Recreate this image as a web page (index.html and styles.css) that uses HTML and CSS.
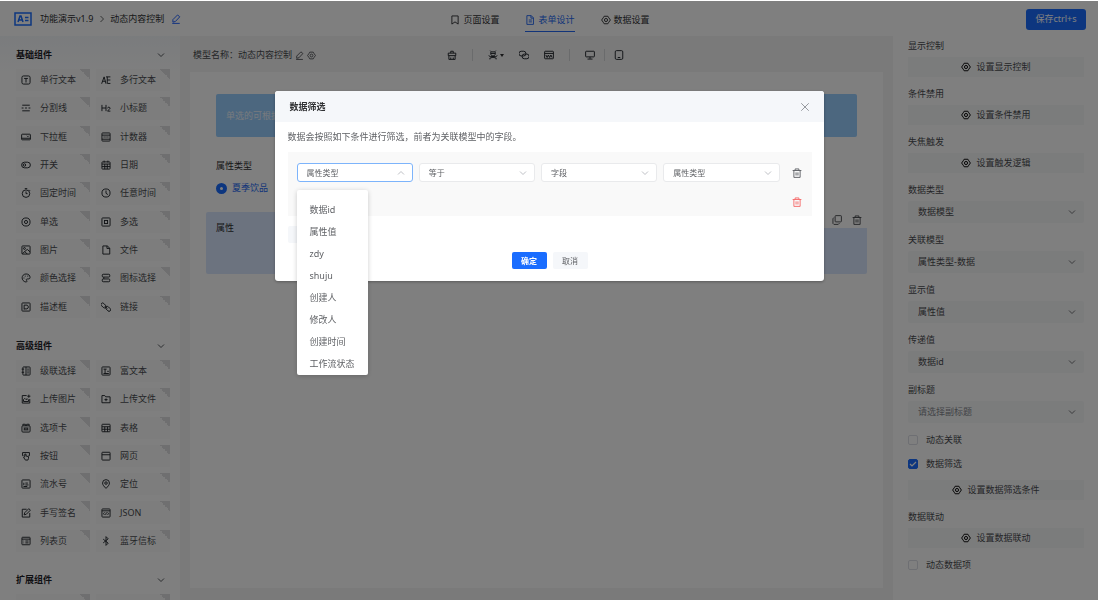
FILE: index.html
```html
<!DOCTYPE html>
<html lang="zh-CN">
<head>
  <meta charset="UTF-8">
  <meta name="viewport" content="width=device-width, initial-scale=1.0">
  <title>表单设计</title>
  <link rel="stylesheet" href="styles.css">
</head>
<body>
  <!-- Icon sprite -->
  <svg class="sprite" xmlns="http://www.w3.org/2000/svg">
    <symbol id="i-down" viewBox="0 0 16 16"><path d="M2 5l6 6 6-6"/></symbol>
    <symbol id="i-up" viewBox="0 0 16 16"><path d="M2 11l6-6 6 6"/></symbol>
    <symbol id="i-close" viewBox="0 0 16 16"><path d="M2 2l12 12M14 2L2 14"/></symbol>
    <symbol id="i-edit" viewBox="0 0 16 16"><path d="M3 9l7.500-7.500 3.500 3L7 12l-4 1zM2 15h12"/></symbol>
    <symbol id="i-gear" viewBox="0 0 16 16"><path d="M5 2h6l1.500 2.500L15 8l-2.500 3.500L11 14H5l-1.500-2.500L1 8l2.500-3.500z"/><circle cx="8" cy="8" r="2.500"/></symbol>
    <symbol id="i-trash" viewBox="0 0 16 16"><path d="M1 4h14M5 4V1.500h6V4M3 4v11h10V4M6.500 7v5M9.500 7v5"/></symbol>
    <symbol id="i-copy" viewBox="0 0 16 16"><rect x="5" y="1" width="10" height="10" rx="1"/><path d="M3 4L1.500 6v7.500L3 15h7l2-2"/></symbol>
    <symbol id="i-bookmark" viewBox="0 0 16 16"><path d="M3 1.500h10v13L8 11l-5 3.500z"/></symbol>
    <symbol id="i-doc" viewBox="0 0 16 16"><path d="M3 1h7l3.500 3.500V15H3zM9.500 1v4h4M6 8h5M6 11h5"/></symbol>
    <symbol id="i-clean" viewBox="0 0 16 16"><path d="M6 5V2h4v3M2 5h12v4H2zM3 9v6h10V9M6 15v-3M10 15v-3"/></symbol>
    <symbol id="i-person" viewBox="0 0 16 16"><path d="M3.500 1l2 2h5l2-2M4.500 3v4l2 2.500h3l2-2.500V3M4.500 5.500h7M8 9.500V12M1 9l2.500 1.500h9L15 9M3 15v-2l5-1.500 5 1.500v2"/></symbol>
    <symbol id="i-chain" viewBox="0 0 16 16"><rect x="0" y="2" width="11" height="7.500" rx="3.500"/><rect x="5" y="6.500" width="11" height="7.500" rx="3.500"/></symbol>
    <symbol id="i-code" viewBox="0 0 16 16"><rect x="1" y="2" width="14" height="12" rx="1"/><path d="M1 5.500h14M3 8l2 4 2-4 2 4 2-4 2 4"/></symbol>
    <symbol id="i-monitor" viewBox="0 0 16 16"><rect x="1" y="2" width="14" height="9" rx="1"/><path d="M8 11v3M4 14.500h8"/></symbol>
    <symbol id="i-tablet" viewBox="0 0 16 16"><rect x="2" y="1" width="12" height="14" rx="2"/><path d="M6 12h4"/></symbol>
    <symbol id="i-text" viewBox="0 0 16 16"><rect x="1.500" y="1.500" width="13" height="13" rx="2.500"/><path d="M5 5.500h6M8 5.500V12"/></symbol>
    <symbol id="i-area" viewBox="0 0 16 16"><path d="M1 14L5 3l3 11M2.500 10H7M8 3h7M10 8h5M10 13.500h5M10 3v10"/></symbol>
    <symbol id="i-line" viewBox="0 0 16 16"><path d="M2 3.500h12M1 8h3M6.500 8h3M12 8h3M2 12.500h12"/></symbol>
    <symbol id="i-h2" viewBox="0 0 16 16"><path d="M1.500 3v10M8 3v10M1.500 8H8M10.500 8.500c0-2.500 4-2.500 4 0 0 1.500-4 3-4 4.500H15"/></symbol>
    <symbol id="i-select" viewBox="0 0 16 16"><rect x="1" y="3.500" width="14" height="9" rx="1"/><path d="M1 10h14M9.500 6l1.500 1.500L12.500 6"/></symbol>
    <symbol id="i-count" viewBox="0 0 16 16"><rect x="1.500" y="1.500" width="13" height="13" rx="1"/><path d="M1.500 5h13M1.500 11.500h13M4 8h2M7 8h2M10 8h2"/></symbol>
    <symbol id="i-switch" viewBox="0 0 16 16"><rect x="1" y="3.500" width="14" height="9" rx="4.500"/><circle cx="5.500" cy="8" r="2"/></symbol>
    <symbol id="i-date" viewBox="0 0 16 16"><rect x="1.500" y="3" width="13" height="11.500" rx="1"/><path d="M1.500 6.500h13M5 1v3M11 1v3M6 6.500v8M10 6.500v8M1.500 10.500h13"/></symbol>
    <symbol id="i-timer" viewBox="0 0 16 16"><circle cx="8" cy="9" r="6"/><path d="M6 1h4M8 5.500V9h2.500M13 3l1.500 1.500"/></symbol>
    <symbol id="i-clock" viewBox="0 0 16 16"><circle cx="8" cy="8" r="6.500"/><path d="M8 4v4.500l3 2"/></symbol>
    <symbol id="i-radio" viewBox="0 0 16 16"><circle cx="8" cy="8" r="6.500"/><circle cx="8" cy="8" r="2.500"/></symbol>
    <symbol id="i-check" viewBox="0 0 16 16"><rect x="1.500" y="1.500" width="13" height="13" rx="1"/><rect x="5.500" y="5.500" width="5" height="5"/></symbol>
    <symbol id="i-image" viewBox="0 0 16 16"><rect x="1.500" y="1.500" width="13" height="13" rx="1"/><circle cx="5.500" cy="5.500" r="1.500"/><path d="M2 14l8-7 4.500 4M6 10.500l4 4"/></symbol>
    <symbol id="i-file" viewBox="0 0 16 16"><path d="M3 1.500h7L14 5v9.500H3zM9.500 1.500v4H14"/></symbol>
    <symbol id="i-color" viewBox="0 0 16 16"><path d="M8 14.500C-.5 13 0 2 8 1.500c4 0 6.500 2.500 6.500 5.500 0 3-3 2.500-4.500 2.500S8 11 9 12s.5 2.500-1 2.500z"/><path d="M4 8h1.500M6 5h1.500M10 5h1.500"/></symbol>
    <symbol id="i-icons" viewBox="0 0 16 16"><rect x="2" y="2" width="12" height="4.500" rx="1.500"/><rect x="2" y="9.500" width="12" height="4.500" rx="1.500"/><path d="M4.500 6.500v3"/></symbol>
    <symbol id="i-desc" viewBox="0 0 16 16"><rect x="1.500" y="1.500" width="13" height="13" rx="1"/><path d="M5 12V5h5l1.500 1.500v3L9.500 11H5"/></symbol>
    <symbol id="i-link" viewBox="0 0 16 16"><rect x="-.5" y="3" width="9" height="5" rx="2.500" transform="rotate(45 4 5.500)"/><rect x="7" y="8.500" width="9" height="5" rx="2.500" transform="rotate(45 11.500 11)"/><path d="M6 6.500l4 4"/></symbol>
    <symbol id="i-cascade" viewBox="0 0 16 16"><rect x="3" y="1.500" width="11.500" height="13" rx="1"/><path d="M8 1.500v13M1 5h4M1 10h4M10 5h2.500M10 8h2.500M10 11h2.500"/></symbol>
    <symbol id="i-rich" viewBox="0 0 16 16"><rect x="1.500" y="1.500" width="13" height="13" rx="1"/><path d="M4 5h5M6.500 5v6.500M10 8.500h2.500M4 12h8.500"/></symbol>
    <symbol id="i-upimg" viewBox="0 0 16 16"><path d="M9 2.500H2v12h12V8M12.500 1v5M10 3.500h5M4 12V9l2-2 2 2 2-1.500 2 2V12z"/></symbol>
    <symbol id="i-upfile" viewBox="0 0 16 16"><path d="M1.500 2.500H6l1.500 2h7v9.500h-13zM8 7v4.500M5.500 9h5"/></symbol>
    <symbol id="i-tab" viewBox="0 0 16 16"><rect x="1.500" y="4.500" width="13" height="10" rx="1.500"/><path d="M3 4.500V2h4v2.500M9 4.500V2h4v2.500M4 8h8M4 11h8M6 8v3M10 8v3"/></symbol>
    <symbol id="i-table" viewBox="0 0 16 16"><rect x="1.500" y="2" width="13" height="12" rx="1"/><path d="M1.500 6h13M1.500 10h13M6 6v8M10.500 6v8"/></symbol>
    <symbol id="i-button" viewBox="0 0 16 16"><path d="M4 7.500H2.500v-5h11v5H12M6 13l-2-3 2-.5V5h2v3l4 1v3l-1 2.500H7z"/></symbol>
    <symbol id="i-web" viewBox="0 0 16 16"><rect x="1.500" y="2" width="13" height="12.500" rx="1"/><path d="M1.500 6h13"/></symbol>
    <symbol id="i-serial" viewBox="0 0 16 16"><rect x="1.500" y="1.500" width="13" height="13" rx="1"/><path d="M4.500 6v4M7 6.500h4M7 9.500h5M4 12h6"/></symbol>
    <symbol id="i-pin" viewBox="0 0 16 16"><path d="M8 15C5 12 2.500 9.500 2.500 6.500a5.500 5.500 0 0 1 11 0C13.500 9.500 11 12 8 15z"/><circle cx="8" cy="6.500" r="2"/></symbol>
    <symbol id="i-sign" viewBox="0 0 16 16"><path d="M9 2H2v12.500h12V8M5 11l1-3.500L12.500 1 15 3.500 8.500 10z"/></symbol>
    <symbol id="i-json" viewBox="0 0 16 16"><rect x="1.500" y="1.500" width="13" height="13" rx="1"/><path d="M1.500 4.500h13M5.500 7L4 9l1.500 2M10.500 7L12 9l-1.500 2M8.500 7l-1 4"/></symbol>
    <symbol id="i-list" viewBox="0 0 16 16"><rect x="1.500" y="2" width="13" height="12" rx="1"/><path d="M1.500 5h13M4 8h1M7 8h5M4 11h1M7 11h5"/></symbol>
    <symbol id="i-bt" viewBox="0 0 16 16"><path d="M3.500 5l8 6.500L8 15V1l3.500 3.500-8 6.500"/></symbol>
  </svg>

  <header class="header">
    <div class="brand">
      <svg class="logo" viewBox="0 0 18 14"><rect x="1" y="1" width="16" height="12"/><path d="M4 10l2-6h1l2 6M5 8h3M11 5.500h3.500M11 8.500h3.500"/></svg>
      <span>功能演示v1.9</span>
      <svg class="icon crumb" viewBox="0 0 16 16"><path d="M5 2l6 6-6 6"/></svg>
      <span>动态内容控制</span>
      <svg class="icon brand-edit"><use href="#i-edit"/></svg>
    </div>
    <nav class="nav">
      <a href="#"><svg class="icon"><use href="#i-bookmark"/></svg>页面设置</a>
      <a href="#" class="active"><svg class="icon"><use href="#i-doc"/></svg>表单设计</a>
      <a href="#"><svg class="icon"><use href="#i-gear"/></svg>数据设置</a>
    </nav>
    <button class="save">保存ctrl+s</button>
  </header>

  <div class="layout">
    <!-- Component library -->
    <aside class="sidebar">
      <section class="group">
        <h2>基础组件<svg class="icon"><use href="#i-down"/></svg></h2>
        <div class="tiles tiles-basic">
          <div class="tile"><svg class="icon"><use href="#i-text"/></svg>单行文本</div>
          <div class="tile"><svg class="icon"><use href="#i-area"/></svg>多行文本</div>
          <div class="tile"><svg class="icon"><use href="#i-line"/></svg>分割线</div>
          <div class="tile"><svg class="icon"><use href="#i-h2"/></svg>小标题</div>
          <div class="tile"><svg class="icon"><use href="#i-select"/></svg>下拉框</div>
          <div class="tile"><svg class="icon"><use href="#i-count"/></svg>计数器</div>
          <div class="tile"><svg class="icon"><use href="#i-switch"/></svg>开关</div>
          <div class="tile"><svg class="icon"><use href="#i-date"/></svg>日期</div>
          <div class="tile"><svg class="icon"><use href="#i-timer"/></svg>固定时间</div>
          <div class="tile"><svg class="icon"><use href="#i-clock"/></svg>任意时间</div>
          <div class="tile"><svg class="icon"><use href="#i-radio"/></svg>单选</div>
          <div class="tile"><svg class="icon"><use href="#i-check"/></svg>多选</div>
          <div class="tile"><svg class="icon"><use href="#i-image"/></svg>图片</div>
          <div class="tile"><svg class="icon"><use href="#i-file"/></svg>文件</div>
          <div class="tile"><svg class="icon"><use href="#i-color"/></svg>颜色选择</div>
          <div class="tile"><svg class="icon"><use href="#i-icons"/></svg>图标选择</div>
          <div class="tile"><svg class="icon"><use href="#i-desc"/></svg>描述框</div>
          <div class="tile"><svg class="icon"><use href="#i-link"/></svg>链接</div>
        </div>
      </section>
      <section class="group">
        <h2>高级组件<svg class="icon"><use href="#i-down"/></svg></h2>
        <div class="tiles tiles-advanced">
          <div class="tile"><svg class="icon"><use href="#i-cascade"/></svg>级联选择</div>
          <div class="tile"><svg class="icon"><use href="#i-rich"/></svg>富文本</div>
          <div class="tile"><svg class="icon"><use href="#i-upimg"/></svg>上传图片</div>
          <div class="tile"><svg class="icon"><use href="#i-upfile"/></svg>上传文件</div>
          <div class="tile"><svg class="icon"><use href="#i-tab"/></svg>选项卡</div>
          <div class="tile"><svg class="icon"><use href="#i-table"/></svg>表格</div>
          <div class="tile"><svg class="icon"><use href="#i-button"/></svg>按钮</div>
          <div class="tile"><svg class="icon"><use href="#i-web"/></svg>网页</div>
          <div class="tile"><svg class="icon"><use href="#i-serial"/></svg>流水号</div>
          <div class="tile"><svg class="icon"><use href="#i-pin"/></svg>定位</div>
          <div class="tile"><svg class="icon"><use href="#i-sign"/></svg>手写签名</div>
          <div class="tile"><svg class="icon"><use href="#i-json"/></svg>JSON</div>
          <div class="tile"><svg class="icon"><use href="#i-list"/></svg>列表页</div>
          <div class="tile"><svg class="icon"><use href="#i-bt"/></svg>蓝牙信标</div>
        </div>
      </section>
      <section class="group">
        <h2>扩展组件<svg class="icon"><use href="#i-down"/></svg></h2>
        <div class="tiles">
          <div class="tile"></div>
          <div class="tile"></div>
        </div>
      </section>
    </aside>

    <!-- Form canvas -->
    <main class="main">
      <div class="toolbar">
        <div class="model">
          <span>模型名称：动态内容控制</span>
          <svg class="icon"><use href="#i-edit"/></svg>
          <svg class="icon"><use href="#i-gear"/></svg>
        </div>
        <div class="tools">
          <button class="tool" aria-label="清空"><svg class="icon"><use href="#i-clean"/></svg></button>
          <span class="divider"></span>
          <div class="tool-group">
            <button class="tool" aria-label="事件"><svg class="icon"><use href="#i-person"/></svg><span class="caret"></span></button>
            <button class="tool" aria-label="关联"><svg class="icon"><use href="#i-chain"/></svg></button>
            <button class="tool" aria-label="代码"><svg class="icon"><use href="#i-code"/></svg></button>
          </div>
          <span class="divider"></span>
          <div class="tool-group devices">
            <button class="tool" aria-label="电脑"><svg class="icon"><use href="#i-monitor"/></svg></button>
            <span class="divider"></span>
            <button class="tool" aria-label="平板"><svg class="icon"><use href="#i-tablet"/></svg></button>
          </div>
        </div>
      </div>
      <div class="canvas">
        <div class="banner">单选的可根据</div>
        <div class="field">
          <div class="field-label">属性类型</div>
          <label class="radio"><input type="radio" name="kind" checked>夏季饮品</label>
        </div>
        <div class="field selected">
          <div class="field-label">属性</div>
          <div class="field-actions">
            <button class="tool" aria-label="复制"><svg class="icon"><use href="#i-copy"/></svg></button>
            <button class="tool" aria-label="删除"><svg class="icon"><use href="#i-trash"/></svg></button>
          </div>
        </div>
      </div>
    </main>

    <!-- Properties -->
    <aside class="props">
      <div class="prop">
        <div class="prop-label">显示控制</div>
        <button class="setting"><svg class="icon"><use href="#i-gear"/></svg>设置显示控制</button>
      </div>
      <div class="prop">
        <div class="prop-label">条件禁用</div>
        <button class="setting"><svg class="icon"><use href="#i-gear"/></svg>设置条件禁用</button>
      </div>
      <div class="prop">
        <div class="prop-label">失焦触发</div>
        <button class="setting"><svg class="icon"><use href="#i-gear"/></svg>设置触发逻辑</button>
      </div>
      <div class="prop">
        <label class="prop-label" for="data-type">数据类型</label>
        <div class="select"><select id="data-type"><option>数据模型</option></select><svg class="icon"><use href="#i-down"/></svg></div>
      </div>
      <div class="prop">
        <label class="prop-label" for="data-model">关联模型</label>
        <div class="select"><select id="data-model"><option>属性类型-数据</option></select><svg class="icon"><use href="#i-down"/></svg></div>
      </div>
      <div class="prop">
        <label class="prop-label" for="show-value">显示值</label>
        <div class="select"><select id="show-value"><option>属性值</option></select><svg class="icon"><use href="#i-down"/></svg></div>
      </div>
      <div class="prop">
        <label class="prop-label" for="pass-value">传递值</label>
        <div class="select"><select id="pass-value"><option>数据id</option></select><svg class="icon"><use href="#i-down"/></svg></div>
      </div>
      <div class="prop">
        <label class="prop-label" for="subtitle">副标题</label>
        <div class="select"><select id="subtitle" class="placeholder"><option>请选择副标题</option></select><svg class="icon"><use href="#i-down"/></svg></div>
      </div>
      <label class="check"><input type="checkbox">动态关联</label>
      <label class="check"><input type="checkbox" checked>数据筛选</label>
      <div class="prop">
        <button class="setting"><svg class="icon"><use href="#i-gear"/></svg>设置数据筛选条件</button>
      </div>
      <div class="prop">
        <div class="prop-label">数据联动</div>
        <button class="setting"><svg class="icon"><use href="#i-gear"/></svg>设置数据联动</button>
      </div>
      <label class="check"><input type="checkbox">动态数据项</label>
    </aside>
  </div>

  <!-- Filter dialog -->
  <div class="overlay">
    <div class="modal" role="dialog" aria-labelledby="modal-title">
      <div class="modal-header">
        <h1 id="modal-title">数据筛选</h1>
        <button class="close" aria-label="关闭"><svg class="icon"><use href="#i-close"/></svg></button>
      </div>
      <div class="modal-body">
        <p>数据会按照如下条件进行筛选，前者为关联模型中的字段。</p>
        <div class="filter-box">
          <div class="filter-row">
            <div class="filter-fields">
              <div class="select open">
                <select aria-label="字段"><option>属性类型</option></select><svg class="icon"><use href="#i-up"/></svg>
                <ul class="menu">
                  <li>数据id</li>
                  <li>属性值</li>
                  <li>zdy</li>
                  <li>shuju</li>
                  <li>创建人</li>
                  <li>修改人</li>
                  <li>创建时间</li>
                  <li>工作流状态</li>
                </ul>
              </div>
              <div class="select"><select aria-label="条件"><option>等于</option></select><svg class="icon"><use href="#i-down"/></svg></div>
              <div class="select"><select aria-label="类型"><option>字段</option></select><svg class="icon"><use href="#i-down"/></svg></div>
              <div class="select"><select aria-label="值"><option>属性类型</option></select><svg class="icon"><use href="#i-down"/></svg></div>
            </div>
            <button class="tool" aria-label="删除条件"><svg class="icon"><use href="#i-trash"/></svg></button>
          </div>
          <div class="filter-row filter-end">
            <button class="tool danger" aria-label="删除分组"><svg class="icon"><use href="#i-trash"/></svg></button>
          </div>
        </div>
        <button class="add" aria-label="添加条件"></button>
        <div class="modal-footer">
          <button class="btn primary">确定</button>
          <button class="btn">取消</button>
        </div>
      </div>
    </div>
  </div>
</body>
</html>
```

FILE: styles.css
```css
* {
  box-sizing: border-box;
}

body {
  margin: 0;
  height: 100vh;
  overflow: hidden;
  display: flex;
  flex-direction: column;
  font-family: "Noto Sans", "Noto Sans CJK SC", sans-serif;
  font-size: 9px;
  line-height: 16px;
  color: #4a4c50;
  background-color: #fff;
}

button,
select,
input {
  font: inherit;
  color: inherit;
  margin: 0;
}

button {
  border: none;
  padding: 0;
  background: none;
  cursor: pointer;
}

.sprite {
  position: absolute;
  width: 0;
  height: 0;
}

.icon {
  width: 10px;
  height: 10px;
  flex: none;
  fill: none;
  stroke: currentColor;
  stroke-width: 1.5;
}

/* Header */
.header {
  flex: none;
  height: 36px;
  padding: 2px 12px 0 14px;
  display: grid;
  grid-template-columns: 1fr auto 1fr;
  align-items: center;
}

.brand {
  display: flex;
  align-items: center;
  color: #303133;
}

.logo {
  width: 18px;
  height: 14px;
  margin-right: 8px;
  fill: none;
  stroke: #1a6dff;
  stroke-width: 1.5;
}

.crumb {
  width: 8px;
  height: 8px;
  margin: 0 4px 0 5px;
}

.brand-edit {
  margin-left: 7px;
  color: #1a5cff;
}

.nav {
  display: flex;
  gap: 26px;
}

.nav a {
  display: flex;
  align-items: center;
  gap: 3px;
  padding: 6px 0 3px;
  border-bottom: 1px solid transparent;
  color: #303133;
  text-decoration: none;
}

.nav a.active {
  color: #2468f2;
  border-bottom-color: #2468f2;
}

.save {
  justify-self: end;
  width: 60px;
  height: 21px;
  border-radius: 3px;
  background-color: #1a6dff;
  color: #fff;
}

.layout {
  flex: 1;
  min-height: 0;
  display: flex;
}

/* Component library */
.sidebar {
  width: 180px;
  flex: none;
  padding: 5px 10px 0 16px;
  overflow: hidden;
  background: linear-gradient(#f5f8fb, #fff 40px);
}

.group {
  margin-bottom: 14px;
}

.group h2 {
  display: flex;
  align-items: center;
  justify-content: space-between;
  height: 28px;
  margin: 0;
  padding-right: 5px;
  font-size: 9px;
  font-weight: 700;
  color: #1f2329;
}

.group h2 .icon {
  width: 8px;
  height: 8px;
}

.tiles {
  display: grid;
  grid-template-columns: 1fr 1fr;
  grid-auto-rows: 1fr;
  gap: 6px;
}

.tiles-basic {
  height: 249px;
}

.tiles-advanced {
  height: 192px;
}

.tile {
  min-height: 22px;
  display: flex;
  align-items: center;
  gap: 9px;
  padding-left: 5px;
  background: linear-gradient(45deg, transparent 50%, #dedfe0 50%) right top / 10px 10px no-repeat #fafbfb;
}

.tile .icon {
  color: #1f2329;
}

/* Form canvas */
.main {
  flex: 1;
  min-width: 0;
  display: flex;
  flex-direction: column;
  padding: 0 10px 12px;
  background-color: #f4f4f5;
}

.toolbar {
  height: 36px;
  padding: 2px 6px 0 3px;
  display: grid;
  grid-template-columns: 1fr auto 1fr;
  align-items: center;
}

.model,
.tools,
.tool-group {
  display: flex;
  align-items: center;
}

.model {
  gap: 3px;
}

.model .icon {
  width: 9px;
  height: 9px;
}

.tools .icon {
  color: #1f2329;
}

.tools,
.tool-group {
  gap: 15px;
}

.tool-group.devices {
  gap: 9px;
}

.tool {
  display: flex;
  align-items: center;
  gap: 2px;
}

.divider {
  width: 1px;
  height: 12px;
  background-color: #d4d6d8;
}

.caret {
  border: 2px solid transparent;
  border-top: 3px solid #303133;
  border-bottom: 0;
}

.canvas {
  flex: 1;
  padding: 22px 16px;
  background-color: #fff;
}

.banner {
  height: 43px;
  margin: 0 10px;
  padding: 14px 10px;
  border-radius: 2px;
  background-color: #98ceff;
  color: #eef5fc;
}

.field {
  padding: 21px 10px 16px;
}

.field-label {
  color: #303133;
}

.radio {
  display: flex;
  align-items: center;
  gap: 5px;
  margin-top: 6px;
  color: #2468f2;
}

.radio input {
  appearance: none;
  width: 11px;
  height: 11px;
  border: 4px solid #1a6dff;
  border-radius: 50%;
  background-color: #fff;
}

.field.selected {
  position: relative;
  height: 62px;
  padding: 8px 10px;
  border-radius: 2px;
  background-color: #d9e7ff;
}

.field-actions {
  position: absolute;
  top: 0;
  right: 0;
  display: flex;
  align-items: center;
  gap: 10px;
  height: 16px;
  padding: 0 5px 0 13px;
  background-color: #fff;
}

/* Properties */
.props {
  width: 205px;
  flex: none;
  padding: 2px 14px 0 15px;
  overflow: hidden;
}

.prop {
  margin-bottom: 9px;
}

.prop-label {
  display: block;
  margin-bottom: 3px;
}

.setting {
  width: 100%;
  height: 20px;
  display: flex;
  align-items: center;
  justify-content: center;
  gap: 5px;
  background-color: #f7f8f9;
}

.setting .icon {
  color: #000;
}

.select {
  position: relative;
  display: flex;
  align-items: center;
}

.select select {
  appearance: none;
  width: 100%;
  height: 22px;
  padding: 0 24px 0 10px;
  border: none;
  border-radius: 2px;
  outline: none;
  background-color: #f7f8f9;
}

.select > .icon {
  position: absolute;
  right: 8px;
  width: 8px;
  height: 8px;
  pointer-events: none;
}

.select select.placeholder {
  color: #85888e;
}

.check {
  display: flex;
  align-items: center;
  gap: 8px;
  margin-bottom: 8px;
}

.check input {
  appearance: none;
  width: 10px;
  height: 10px;
  border: 1px solid #dcdfe6;
  border-radius: 2px;
}

.check input:checked {
  border-color: #1a6dff;
  background: #1a6dff url("data:image/svg+xml,%3Csvg xmlns='http://www.w3.org/2000/svg' viewBox='0 0 8 8'%3E%3Cpath d='M1 4l2 2 4-4' fill='none' stroke='white' stroke-width='1.2'/%3E%3C/svg%3E") center / 8px no-repeat;
}

/* Filter dialog */
.overlay {
  position: fixed;
  inset: 1px 0 0;
  display: flex;
  justify-content: center;
  align-items: flex-start;
  padding-top: 90px;
  background-color: rgba(0, 0, 0, 0.5);
}

.modal {
  width: 50%;
  border-radius: 3px;
  background-color: #fff;
  color: #606266;
  box-shadow: 0 1px 3px rgba(0, 0, 0, 0.3);
}

.modal-header {
  display: flex;
  align-items: center;
  justify-content: space-between;
  height: 31px;
  padding: 0 14px 0 15px;
  border-radius: 3px 3px 0 0;
  background-color: #f5f7fa;
}

.modal-header h1 {
  margin: 0;
  font-size: 9px;
  font-weight: 700;
  color: #303133;
}

.close {
  display: flex;
  color: #909399;
}

.modal-body {
  padding: 7px 12px 12px 13px;
}

.modal-body p {
  margin: 0 0 7px;
}

.filter-box {
  display: flex;
  flex-direction: column;
  gap: 15px;
  padding: 11px 10px 9px 9px;
  background-color: #f9f9f9;
}

.filter-row {
  display: flex;
  align-items: center;
  gap: 12px;
}

.filter-end {
  justify-content: flex-end;
}

.filter-fields {
  flex: 1;
  display: grid;
  grid-template-columns: repeat(4, 1fr);
  gap: 6px;
}

.modal .select select {
  height: 19px;
  padding: 0 20px 0 9px;
  border: 1px solid #e9eaec;
  border-radius: 3px;
  background-color: #fff;
  font-size: 8px;
}

.modal .select > .icon {
  color: #a8abb2;
}

.modal .select.open select {
  border-color: #7db4fb;
}

.menu {
  position: absolute;
  top: 27px;
  left: 0;
  margin: 0;
  padding: 9px 13px 0;
  list-style: none;
  line-height: 22px;
  white-space: nowrap;
  border-radius: 2px;
  background-color: #fff;
  box-shadow: 0 1px 5px rgba(0, 0, 0, 0.2);
}

.danger {
  color: #f56c6c;
}

.add {
  display: block;
  width: 60px;
  height: 17px;
  margin-top: 10px;
  border-radius: 2px;
  background-color: #f5f7fa;
}

.modal-footer {
  display: flex;
  justify-content: center;
  gap: 6px;
  margin-top: 9px;
}

.btn {
  width: 35px;
  height: 17px;
  border-radius: 2px;
  background-color: #f5f7fa;
  font-size: 8px;
}

.btn.primary {
  background-color: #1a6dff;
  color: #fff;
  font-weight: 700;
}
```
